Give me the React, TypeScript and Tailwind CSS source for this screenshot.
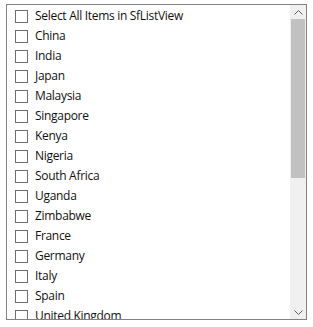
const items = [
  "Select All Items in SfListView",
  "China",
  "India",
  "Japan",
  "Malaysia",
  "Singapore",
  "Kenya",
  "Nigeria",
  "South Africa",
  "Uganda",
  "Zimbabwe",
  "France",
  "Germany",
  "Italy",
  "Spain",
  "United Kingdom",
];

const App = () => {
  return (
    <div className="w-[313px] h-[327px] bg-white pt-[4px] pl-[6px]">
      <div className="w-[301px] h-[316px] border border-[#828282] flex bg-white">
        {/* list */}
        <div className="flex-1 overflow-hidden pt-[1px]">
          {items.map((name) => (
            <div key={name} className="h-[20px] flex items-center pl-[8px] gap-[7px]">
              <span className="w-[13px] h-[13px] border border-[#6e6e6e] bg-white shrink-0" />
              <span
                className="text-[12px] tracking-[-0.3px] text-[#111111] leading-none whitespace-nowrap"
                style={{ fontFamily: '"Open Sans", "Noto Sans", sans-serif' }}
              >
                {name}
              </span>
            </div>
          ))}
        </div>

        {/* scrollbar */}
        <div className="w-[16px] bg-[#f0f0f0] flex flex-col">
          <div className="h-[14px] flex items-center justify-center">
            <svg width="9" height="5" viewBox="0 0 9 5" fill="none">
              <path d="M0.5 4.5L4.5 0.5L8.5 4.5" stroke="#606060" strokeWidth="1" />
            </svg>
          </div>
          <div className="h-[159px] mx-[1px] bg-[#c1c1c1]" />
          <div className="flex-1" />
          <div className="h-[14px] flex items-center justify-center">
            <svg width="9" height="5" viewBox="0 0 9 5" fill="none">
              <path d="M0.5 0.5L4.5 4.5L8.5 0.5" stroke="#606060" strokeWidth="1" />
            </svg>
          </div>
        </div>
      </div>
    </div>
  );
};

export default App;
